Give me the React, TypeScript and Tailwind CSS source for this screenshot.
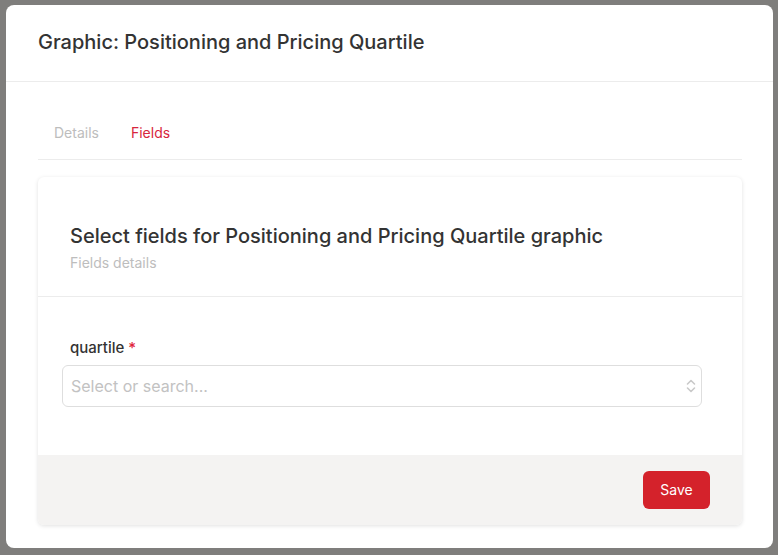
const font = { fontFamily: "Inter, 'Noto Sans', sans-serif" };

function UpDown() {
  return (
    <svg width="12" height="16" viewBox="0 0 12 16" fill="none" className="text-[#c9c9c9]">
      <path d="M2.5 6 6 2.5 9.5 6" stroke="currentColor" strokeWidth="1.6" strokeLinecap="round" strokeLinejoin="round" />
      <path d="M2.5 10 6 13.5 9.5 10" stroke="currentColor" strokeWidth="1.6" strokeLinecap="round" strokeLinejoin="round" />
    </svg>
  );
}

export default function App() {
  return (
    <div className="h-[555px] w-[778px] bg-[#7f7e7c] pt-[5px] pl-[6px]" style={font}>
      <div className="flex h-[543px] w-[767px] flex-col rounded-lg bg-white">
        {/* header */}
        <div className="flex h-[77px] items-center border-b border-[#ececec] px-8 pb-[2px]">
          <h1 className="text-[20px] font-medium text-[#333333]">Graphic: Positioning and Pricing Quartile</h1>
        </div>

        <div className="pr-[31px] pl-8">
          {/* tabs */}
          <div className="flex gap-8 border-b border-[#ececec] pt-[40px] pb-[16px] pl-4 text-[14px]">
            <span className="text-[#bdbdbd]">Details</span>
            <span className="text-[#d7263d]">Fields</span>
          </div>

          {/* card */}
          <div className="mt-[17px] overflow-hidden rounded-md bg-white shadow-[0_1px_4px_rgba(0,0,0,0.12)]">
            <div className="border-b border-[#ececec] px-8 pt-[46px] pb-[23px]">
              <h2 className="text-[20px] font-medium leading-[26px] text-[#333333]">
                Select fields for Positioning and Pricing Quartile graphic
              </h2>
              <p className="mt-[4px] text-[14px] leading-[20px] text-[#bdbdbd]">Fields details</p>
            </div>

            <div className="pt-[40px] pr-10 pb-[48px] pl-6">
              <label className="block pl-2 text-[15px] font-medium text-[#333333]">
                quartile <span className="text-[#e0243a]">*</span>
              </label>
              <div className="mt-[5px] flex h-[42px] items-center justify-between rounded-md border border-[#dedede] pr-[4px] pl-[8px]">
                <span className="text-[16px] text-[#c2c2c2]">Select or search...</span>
                <UpDown />
              </div>
            </div>

            <div className="flex justify-end bg-[#f4f3f2] px-8 pt-4 pb-[16px]">
              <button className="h-[38px] w-[67px] rounded-md bg-[#d4222b] text-[14px] text-white">Save</button>
            </div>
          </div>
        </div>
      </div>
    </div>
  );
}
